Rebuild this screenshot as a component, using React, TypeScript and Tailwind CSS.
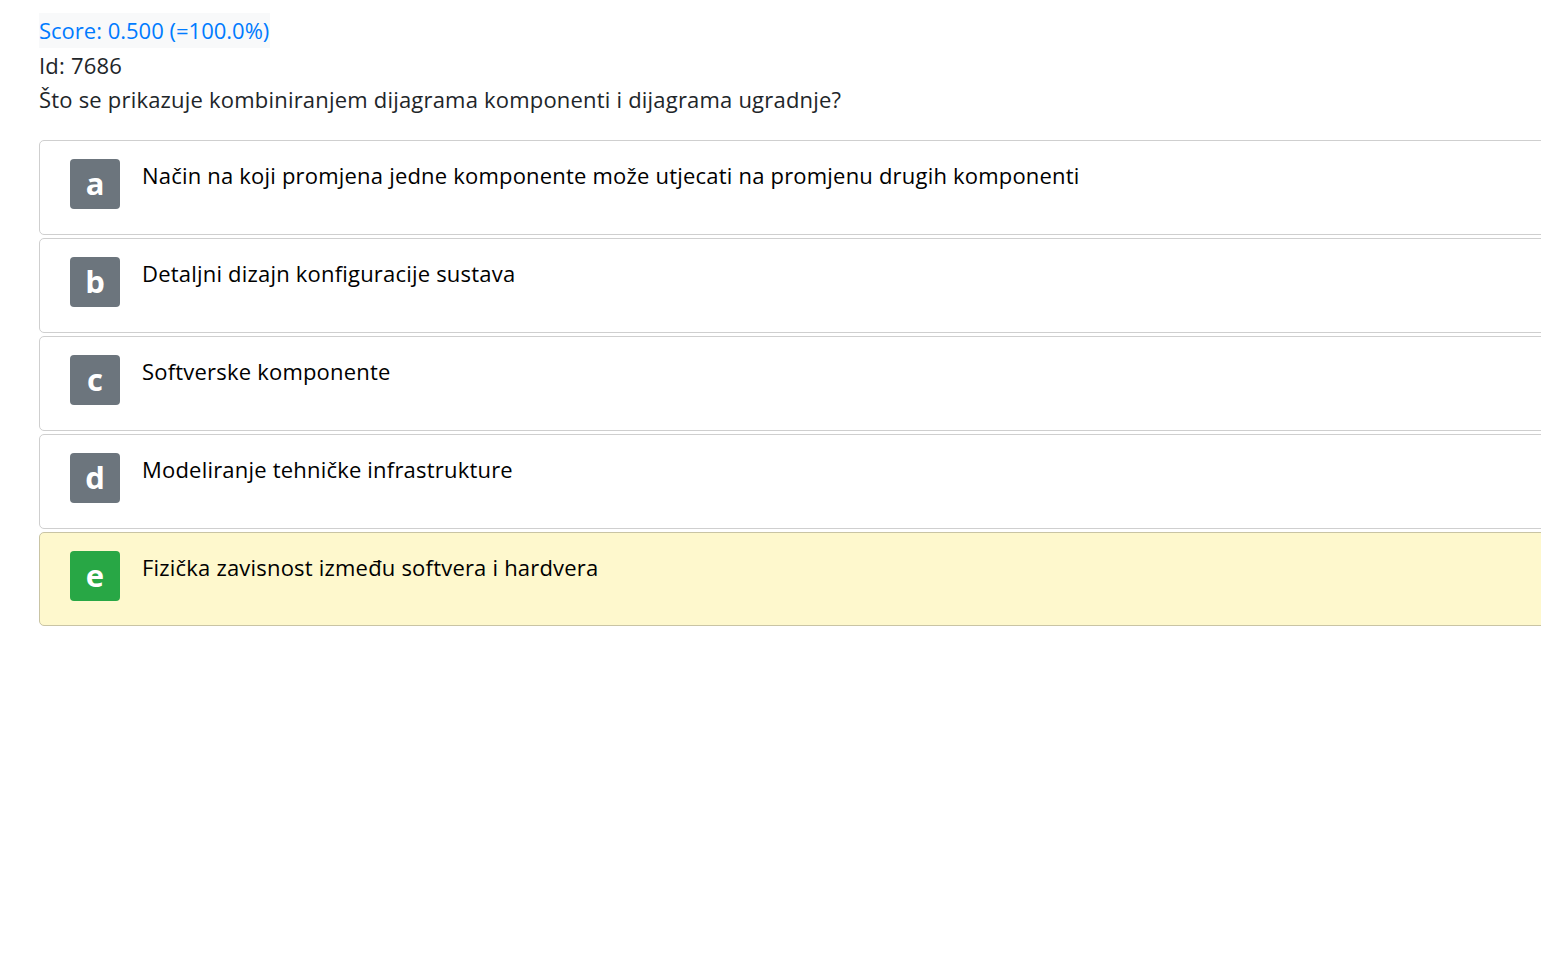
import React from 'react';

const answers = [
  { key: 'a', text: 'Način na koji promjena jedne komponente može utjecati na promjenu drugih komponenti', correct: false },
  { key: 'b', text: 'Detaljni dizajn konfiguracije sustava', correct: false },
  { key: 'c', text: 'Softverske komponente', correct: false },
  { key: 'd', text: 'Modeliranje tehničke infrastrukture', correct: false },
  { key: 'e', text: 'Fizička zavisnost između softvera i hardvera', correct: true },
];

export default function App() {
  return (
    <div
      className="min-h-screen w-full overflow-x-hidden bg-white pl-[39px] pt-[13px] text-[#212529]"
      style={{ fontFamily: '"Open Sans", Roboto, sans-serif' }}
    >
      {/* Header */}
      <div className="text-[22px] leading-[34.5px] tracking-[0.2px]">
        <div className="inline-block bg-[#f8f9fa] pr-[1px] tracking-normal text-[#007bff]">Score: 0.500 (=100.0%)</div>
        <div>Id: 7686</div>
        <div>Što se prikazuje kombiniranjem dijagrama komponenti i dijagrama ugradnje?</div>
      </div>

      {/* Answers */}
      <div className="mt-[23px] flex w-[1560px] flex-col gap-[3px]">
        {answers.map((a) => (
          <div
            key={a.key}
            className={
              a.correct
                ? 'flex h-[94px] items-start gap-[22px] rounded-[5px] border border-[#c9c4a4] bg-[#fef8cd] pl-[30px] pt-[18px]'
                : 'flex h-[95px] items-start gap-[22px] rounded-[5px] border border-[#cfcfcf] bg-white pl-[30px] pt-[18px]'
            }
          >
            <div
              className={
                a.correct
                  ? 'flex h-[50px] w-[50px] shrink-0 items-center justify-center rounded-[4px] bg-[#28a745] text-[31px] font-bold text-white'
                  : 'flex h-[50px] w-[50px] shrink-0 items-center justify-center rounded-[4px] bg-[#6c757d] text-[31px] font-bold text-white'
              }
            >
              {a.key}
            </div>
            <div className="text-[22px] leading-[33px] tracking-[0.2px] text-black">{a.text}</div>
          </div>
        ))}
      </div>
    </div>
  );
}
